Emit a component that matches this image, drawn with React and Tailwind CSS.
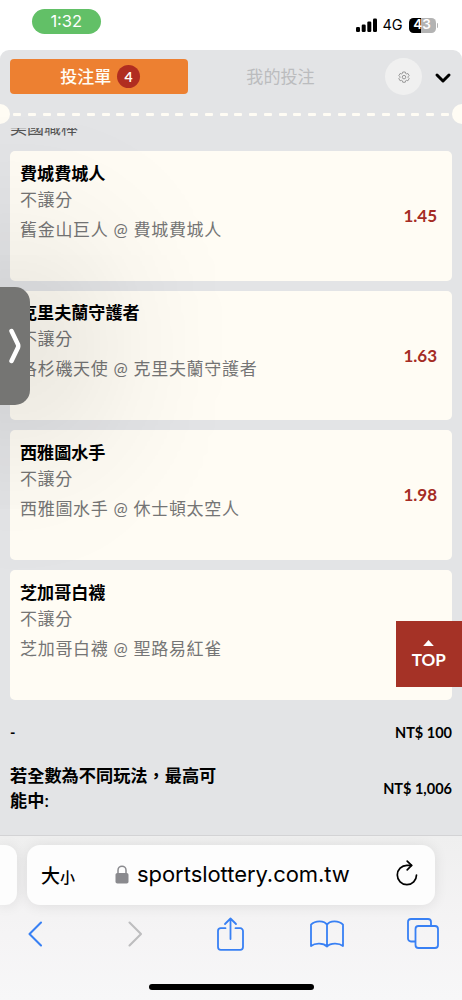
import { useState } from "react";
import { ChevronDown } from "lucide-react";

const bets = [
  { id: 1, pick: "費城費城人", type: "不讓分", match: "舊金山巨人 @ 費城費城人", odds: "1.45" },
  { id: 2, pick: "克里夫蘭守護者", type: "不讓分", match: "洛杉磯天使 @ 克里夫蘭守護者", odds: "1.63" },
  { id: 3, pick: "西雅圖水手", type: "不讓分", match: "西雅圖水手 @ 休士頓太空人", odds: "1.98" },
  { id: 4, pick: "芝加哥白襪", type: "不讓分", match: "芝加哥白襪 @ 聖路易紅雀", odds: "" },
];

const StatusBar = () => (
  <div className="flex h-[50px] shrink-0 items-start justify-between bg-white pr-6 pl-8 font-['Inter','Liberation_Sans',sans-serif]">
    <div className="mt-[9px] flex h-[24.5px] w-[68.5px] items-center justify-center rounded-full bg-[#62c067] text-[16.5px] text-white">
      1:32
    </div>
    <div className="mt-[17px] flex h-4 items-center">
      <svg width="21" height="14" viewBox="0 0 21 14">
        <rect x="0" y="9" width="4" height="5" rx="1.2" />
        <rect x="5.7" y="6.5" width="4" height="7.5" rx="1.2" />
        <rect x="11.3" y="3.5" width="4" height="10.5" rx="1.2" />
        <rect x="17" y="0.5" width="4" height="13.5" rx="1.2" />
      </svg>
      <span className="ml-1.5 w-[20px] text-[14.5px] leading-4">4G</span>
      <div className="ml-1.5 flex h-[15px] w-[27px] items-center justify-center rounded-[4.5px] bg-[linear-gradient(90deg,#000_43%,#b3b3b3_43%)] text-[13.5px] leading-none font-semibold text-white">
        43
      </div>
      <div className="ml-px h-[5px] w-[1.5px] rounded-r-full bg-[#b3b3b3]" />
    </div>
  </div>
);

const BetCard = ({ bet }) => (
  <div className="flex h-[129.5px] shrink-0 items-center justify-between rounded-[5px] bg-[#fffcf4] pr-[15px] pl-2.5">
    <div className="self-start pt-[9.5px] text-[17px] leading-[26px]">
      <div className="text-[17.1px] font-semibold text-black">{bet.pick}</div>
      <div className="tracking-[0.6px] text-[#757575]">{bet.type}</div>
      <div className="mt-1 tracking-[0.7px] text-[#757575]">{bet.match}</div>
    </div>
    <div className="text-[17px] font-bold text-[#a52c24]">{bet.odds}</div>
  </div>
);

const BrowserBar = () => (
  <div className="flex h-[165px] shrink-0 flex-col overflow-hidden border-t border-[#d3d3d5] bg-[linear-gradient(180deg,#efefef,#f5f4f5_60%,#f7f7f8)] font-['Inter','Liberation_Sans',sans-serif]">
    <div className="mt-[9px] flex h-[59.5px] gap-2.5">
      <div className="w-[17px] shrink-0 rounded-r-xl bg-[#fdfdfd] shadow-[0_1px_14px_rgba(0,0,0,0.09)]" />
      <div className="flex w-[408px] shrink-0 items-center rounded-[13px] bg-[#fdfdfd] pr-[17px] pl-[14px] shadow-[0_1px_14px_rgba(0,0,0,0.09)]">
        <div className="flex w-[74px] items-baseline font-['Noto_Sans_CJK_TC',sans-serif] font-medium text-black">
          <span className="text-[19px]">大</span>
          <span className="text-[15px]">小</span>
        </div>
        <svg width="14" height="19" viewBox="0 0 14 19" fill="none" className="shrink-0">
          <path d="M3 9V5.2a4 4 0 0 1 8 0V9" stroke="#8a8a8e" strokeWidth="1.5" />
          <rect x="0.5" y="8" width="13" height="10.5" rx="1.8" fill="#8a8a8e" />
        </svg>
        <span className="ml-2 text-[22px] tracking-[-0.05px] whitespace-nowrap text-black">sportslottery.com.tw</span>
        <svg width="22" height="26" viewBox="0 0 22 26" fill="none" stroke="#000" strokeWidth="1.7" strokeLinecap="round" strokeLinejoin="round" className="mb-1 ml-auto">
          <path d="M20.5 15a9.6 9.6 0 1 1-9.6-9.6h4.6" />
          <path d="M11.2 1.2l4.4 4.2-4.4 4.4" />
        </svg>
      </div>
    </div>
    <div className="mt-[11px] flex h-9 items-center pl-[27.5px] text-[#3880f4]">
      <svg width="15" height="26" viewBox="0 0 15 26" fill="none" stroke="currentColor" strokeWidth="2.1" strokeLinecap="round" strokeLinejoin="round">
        <path d="M13 1.5L1.5 13L13 24.5" />
      </svg>
      <svg width="15" height="26" viewBox="0 0 15 26" fill="none" stroke="#bdbdbf" strokeWidth="2.1" strokeLinecap="round" strokeLinejoin="round" className="ml-[85px]">
        <path d="M1.5 1.5L13 13L1.5 24.5" />
      </svg>
      <svg width="27" height="34" viewBox="0 0 27 34" fill="none" stroke="currentColor" strokeWidth="1.8" strokeLinecap="round" strokeLinejoin="round" className="ml-[74px]">
        <path d="M8.5 11.2H3.8A2.8 2.8 0 0 0 1 14v16a2.8 2.8 0 0 0 2.8 2.8h19.4A2.8 2.8 0 0 0 26 30V14a2.8 2.8 0 0 0-2.8-2.8h-4.7" />
        <path d="M13.5 22V1.5M8 7l5.5-5.5L19 7" />
      </svg>
      <svg width="34" height="28" viewBox="0 0 34 28" fill="none" stroke="currentColor" strokeWidth="1.8" strokeLinecap="round" strokeLinejoin="round" className="ml-[66px]">
        <path d="M17 4.7C14.5 .2 5 .2 1 4.7V26c4-3.2 12.5-3.2 16 .6c3.5-3.8 12-3.8 16-.6V4.7C29 .2 19.5 .2 17 4.7zM17 4.7V26.6" />
      </svg>
      <svg width="32" height="31" viewBox="0 0 32 31" fill="none" stroke="currentColor" strokeWidth="1.8" className="ml-[63px]">
        <path d="M8.5 23.5H4A3 3 0 0 1 1 20.5V4a3 3 0 0 1 3-3h17a3 3 0 0 1 3 3v4" />
        <rect x="8.5" y="8" width="22.5" height="22" rx="3" />
      </svg>
    </div>
    <div className="mt-[32.5px] ml-[148.5px] h-1.5 w-[165px] rounded-full bg-black" />
  </div>
);

const App = () => {
  const [tab, setTab] = useState("slip");

  return (
    <div className="flex h-[1000px] w-[462px] flex-col overflow-hidden bg-white font-['Lato','Noto_Sans_CJK_TC',sans-serif]">
      <StatusBar />

      <div className="relative flex h-[785px] flex-col overflow-hidden rounded-t-[9px] bg-[#e3e4e6]">
        <div className="mt-[9px] flex h-[35px] shrink-0 items-center pl-2.5">
          <button
            type="button"
            onClick={() => setTab("slip")}
            className="flex h-[35px] w-[178px] items-center justify-center gap-1.5 rounded-[4px] bg-[#ed8031] pl-[2px] text-[17px] font-medium text-[#fffcf4]"
          >
            投注單
            <span className="flex size-[22.5px] items-center justify-center rounded-full bg-[#b02d20] text-[14px] font-bold">
              {bets.length}
            </span>
          </button>
          <button
            type="button"
            onClick={() => setTab("mine")}
            aria-selected={tab === "mine"}
            className="w-[185px] text-[17.1px] text-[#bbbcbe]"
          >
            我的投注
          </button>
          <div className="ml-3 flex size-[37px] items-center justify-center rounded-full bg-[#f0f0f0]">
            <svg width="12" height="12" viewBox="0 0 24 24" fill="none" stroke="#8e8e8e" strokeWidth="1.8" strokeLinejoin="round">
              <path d="M9.5 2h5l.8 3 1.5.8 3-.8 2.5 4.3-2.2 2.2v1.500l2.200 2.200-2.500 4.300-3-.8-1.500.8-.8 3h-5l-.8-3-1.500-.8-3 .8-2.500-4.300 2.200-2.200v-1.500L1.700 9.300 4.200 5l3 .8 1.500-.8z" />
              <circle cx="12" cy="12.300" r="3.500" />
            </svg>
          </div>
          <ChevronDown size={24} strokeWidth={3} className="mt-[2px] ml-[9px]" />
        </div>

        {/* ticket perforation */}
        <div className="mt-[9.5px] flex h-5 shrink-0 items-center">
          <div className="h-5 w-2.5 rounded-r-full bg-[#fffcf4]" />
          <div className="flex flex-1 justify-between px-[3px]">
            {Array.from({ length: 30 }, (_, i) => (
              <span key={i} className="mt-[2px] h-[2.5px] w-2 rounded-[1px] bg-[#fffcf4]" />
            ))}
          </div>
          <div className="h-5 w-2.5 rounded-l-full bg-[#fffcf4]" />
        </div>

        <div className="mt-[4.5px] flex h-[23px] shrink-0 flex-col overflow-hidden pl-2.5 text-[17px] leading-[26px] text-[#555]">
          <span className="-mt-[13px]">美國職棒</span>
        </div>

        <div className="flex shrink-0 flex-col gap-[10.2px] px-2.5">
          {bets.map((bet) => (
            <BetCard key={bet.id} bet={bet} />
          ))}
        </div>

        <div className="mt-[21px] flex shrink-0 items-center justify-between px-2.5 text-[14.5px] leading-6 font-bold text-black">
          <span>-</span>
          <span>NT$ 100</span>
        </div>
        <div className="mt-[18px] flex shrink-0 items-center justify-between px-2.5 text-black">
          <span className="w-[216px] text-[17.2px] leading-[25px] font-semibold">若全數為不同玩法，最高可能中:</span>
          <span className="mt-[3px] text-[14.5px] font-bold">NT$ 1,006</span>
        </div>

        <button
          type="button"
          className="absolute top-[570.5px] right-0 flex h-[66.5px] w-[66.5px] flex-col items-center bg-[#a53226] pt-[19.5px] text-[17px] leading-[22px] font-bold text-white"
        >
          <svg width="11" height="6" viewBox="0 0 11 6" fill="currentColor">
            <path d="M5.5 0L10.8 6H.2z" />
          </svg>
          <span className="mt-[3px]">TOP</span>
        </button>

        <div className="absolute top-[237px] left-0 flex h-[118px] w-[29.5px] items-center rounded-r-[15px] bg-[#757573] pl-2 shadow-[0_0_170px_14px_rgba(0,0,0,0.46)]">
          <svg width="14" height="36" viewBox="0 0 14 36" fill="none" stroke="#fff" strokeWidth="4.5" strokeLinecap="round" strokeLinejoin="round">
            <path d="M3.5 3L10 16.500Q10.500 18 10 19.500L3.500 33" />
          </svg>
        </div>
      </div>

      <BrowserBar />
    </div>
  );
};

export default App;
